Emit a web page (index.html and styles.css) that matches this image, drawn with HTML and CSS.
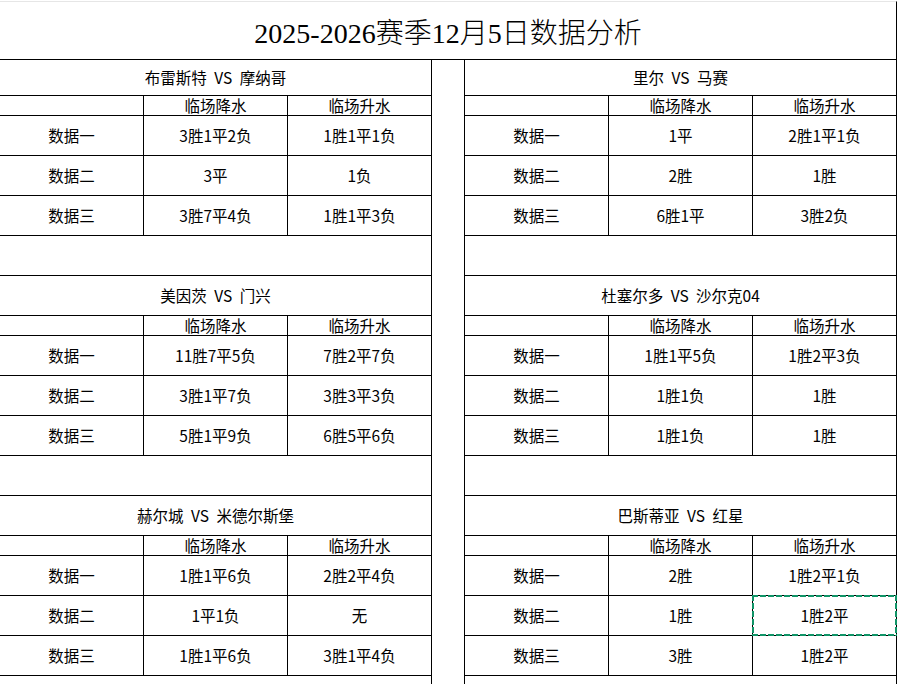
FILE: index.html
```html
<!DOCTYPE html>
<html lang="zh-CN">
<head>
<meta charset="utf-8">
<title>2025-2026赛季12月5日数据分析</title>
<link rel="stylesheet" href="styles.css">
</head>
<body>
<div class="page">
  <div class="title">2025-2026赛季12月5日数据分析</div>
  <div class="sheets">
    <div class="sheet left">
      <div class="cell match first">布雷斯特 VS 摩纳哥</div>
      <div class="cell head"></div><div class="cell head">临场降水</div><div class="cell head">临场升水</div>
      <div class="cell">数据一</div><div class="cell">3胜1平2负</div><div class="cell">1胜1平1负</div>
      <div class="cell">数据二</div><div class="cell">3平</div><div class="cell">1负</div>
      <div class="cell">数据三</div><div class="cell">3胜7平4负</div><div class="cell">1胜1平3负</div>
      <div class="cell blank"></div>
      <div class="cell match">美因茨 VS 门兴</div>
      <div class="cell head"></div><div class="cell head">临场降水</div><div class="cell head">临场升水</div>
      <div class="cell">数据一</div><div class="cell">11胜7平5负</div><div class="cell">7胜2平7负</div>
      <div class="cell">数据二</div><div class="cell">3胜1平7负</div><div class="cell">3胜3平3负</div>
      <div class="cell">数据三</div><div class="cell">5胜1平9负</div><div class="cell">6胜5平6负</div>
      <div class="cell blank"></div>
      <div class="cell match">赫尔城 VS 米德尔斯堡</div>
      <div class="cell head"></div><div class="cell head">临场降水</div><div class="cell head">临场升水</div>
      <div class="cell">数据一</div><div class="cell">1胜1平6负</div><div class="cell">2胜2平4负</div>
      <div class="cell">数据二</div><div class="cell">1平1负</div><div class="cell">无</div>
      <div class="cell">数据三</div><div class="cell">1胜1平6负</div><div class="cell">3胜1平4负</div>
      <div class="cell blank"></div>
    </div>
    <div class="spacer"></div>
    <div class="sheet right">
      <div class="cell match first">里尔 VS 马赛</div>
      <div class="cell head"></div><div class="cell head">临场降水</div><div class="cell head">临场升水</div>
      <div class="cell">数据一</div><div class="cell">1平</div><div class="cell">2胜1平1负</div>
      <div class="cell">数据二</div><div class="cell">2胜</div><div class="cell">1胜</div>
      <div class="cell">数据三</div><div class="cell">6胜1平</div><div class="cell">3胜2负</div>
      <div class="cell blank"></div>
      <div class="cell match">杜塞尔多 VS 沙尔克04</div>
      <div class="cell head"></div><div class="cell head">临场降水</div><div class="cell head">临场升水</div>
      <div class="cell">数据一</div><div class="cell">1胜1平5负</div><div class="cell">1胜2平3负</div>
      <div class="cell">数据二</div><div class="cell">1胜1负</div><div class="cell">1胜</div>
      <div class="cell">数据三</div><div class="cell">1胜1负</div><div class="cell">1胜</div>
      <div class="cell blank"></div>
      <div class="cell match">巴斯蒂亚 VS 红星</div>
      <div class="cell head"></div><div class="cell head">临场降水</div><div class="cell head">临场升水</div>
      <div class="cell">数据一</div><div class="cell">2胜</div><div class="cell">1胜2平1负</div>
      <div class="cell">数据二</div><div class="cell">1胜</div><div class="cell selected">1胜2平</div>
      <div class="cell">数据三</div><div class="cell">3胜</div><div class="cell">1胜2平</div>
      <div class="cell blank"></div>
    </div>
  </div>
</div>
</body>
</html>
```

FILE: styles.css
```css
html, body {
  margin: 0;
  padding: 0;
  background: #ffffff;
}

.page {
  width: 897px;
  height: 684px;
  overflow: hidden;
  padding-top: 1px;
  box-sizing: border-box;
  font-family: "Noto Sans CJK SC", sans-serif;
  color: #000000;
}

.title {
  box-sizing: border-box;
  width: 897px;
  height: 59px;
  border-top: 1px solid #e6e6e6;
  border-bottom: 1px solid #000000;
  border-right: 1px solid #000000;
  display: flex;
  align-items: center;
  justify-content: center;
  font-family: "Liberation Serif", "Noto Sans CJK SC", serif;
  font-size: 28px;
  font-weight: 300;
}

.sheets {
  display: flex;
  align-items: flex-start;
}

.sheet {
  display: grid;
  grid-template-columns: repeat(3, 143px);
  gap: 1px;
  background: #000000;
  padding-bottom: 1px;
}

.sheet.left {
  padding-right: 1px;
}

.sheet.right {
  padding-left: 1px;
  padding-right: 1px;
}

.spacer {
  width: 32px;
  flex: none;
}

.cell {
  position: relative;
  background: #ffffff;
  height: 39px;
  display: flex;
  align-items: center;
  justify-content: center;
  font-size: 15.5px;
  line-height: 1;
  white-space: pre;
}

.cell.match {
  grid-column: span 3;
  word-spacing: 4px;
}

.cell.match.first {
  height: 35px;
}

.cell.head {
  height: 19px;
}

.cell.blank {
  grid-column: span 3;
}

.cell.selected::after {
  content: "";
  position: absolute;
  left: -1px;
  top: -1px;
  right: -1px;
  bottom: -1px;
  z-index: 2;
  background:
    repeating-linear-gradient(90deg, #109467 0 6px, transparent 6px 8px) left top / 100% 2px no-repeat,
    repeating-linear-gradient(90deg, #109467 0 6px, transparent 6px 8px) left bottom / 100% 2px no-repeat,
    repeating-linear-gradient(180deg, #109467 0 6px, transparent 6px 8px) left top / 2px 100% no-repeat,
    repeating-linear-gradient(180deg, #109467 0 6px, transparent 6px 8px) right top / 2px 100% no-repeat;
}
```
